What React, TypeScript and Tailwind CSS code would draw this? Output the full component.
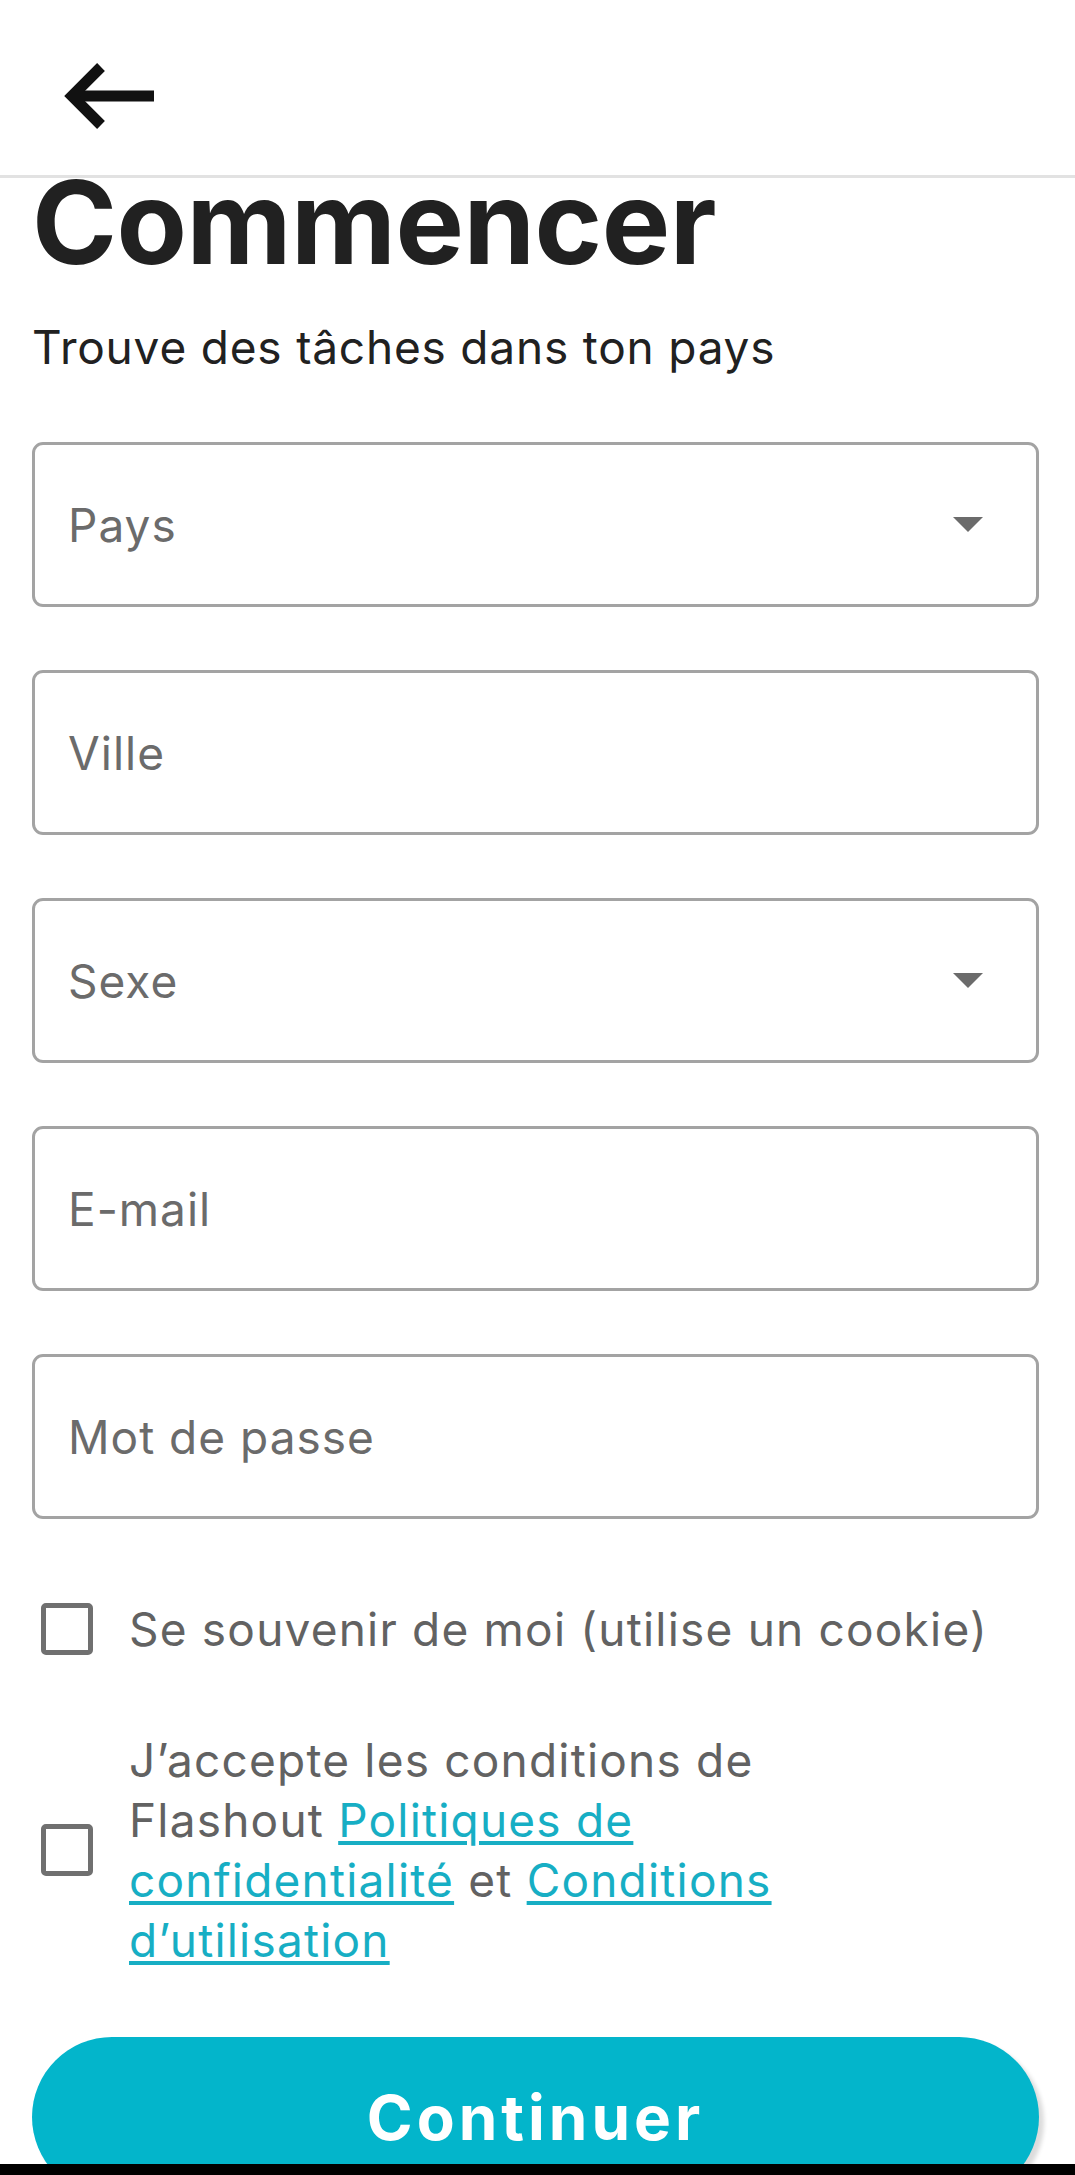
import { useState } from "react";

const font = { fontFamily: "Inter, 'Noto Sans', sans-serif" };

interface FieldProps {
  label: string;
  select?: boolean;
}

function Field({ label, select }: FieldProps) {
  return (
    <div className="flex items-center justify-between h-[165px] border-[3px] border-[#a3a3a3] rounded-[11px] pl-[33px] pr-[53px]">
      <span className="text-[46px] tracking-[1px] text-[#6b6b6b] leading-none">{label}</span>
      {select && (
        <svg width="30" height="15" viewBox="0 0 30 15">
          <path d="M0 0 L30 0 L15 15 Z" fill="#6b6b6b" />
        </svg>
      )}
    </div>
  );
}

function Checkbox({ checked, onClick }: { checked: boolean; onClick: () => void }) {
  return (
    <button
      onClick={onClick}
      className="w-[52px] h-[52px] shrink-0 rounded-[5px] border-[5px] border-[#707070] bg-white"
    >
      {checked && <span className="block w-full h-full bg-[#707070]" />}
    </button>
  );
}

export default function App() {
  const [remember, setRemember] = useState(false);
  const [accept, setAccept] = useState(false);

  return (
    <div className="relative h-[2175px] overflow-hidden bg-white" style={font}>
      {/* top bar */}
      <header className="h-[178px] border-b-[3px] border-[#e2e2e2] pl-[58px] pt-[60px]">
        <svg width="100" height="72" viewBox="0 0 100 72" fill="none">
          <path d="M13 36 H96" stroke="#111" strokeWidth="11" />
          <path d="M43 7 L14 36 L43 65" stroke="#111" strokeWidth="11" strokeLinejoin="miter" />
        </svg>
      </header>

      <main className="pl-[32px] pr-[36px]">
        <h1 className="h-[90px] text-[115px] leading-[90px] font-bold text-[#212121] tracking-[-0.5px]">
          Commencer
        </h1>
        <p className="mt-[52px] text-[46px] leading-[54px] tracking-[0.8px] text-[#212121]">
          Trouve des tâches dans ton pays
        </p>

        <div className="mt-[68px] flex flex-col gap-[63px]">
          <Field label="Pays" select />
          <Field label="Ville" />
          <Field label="Sexe" select />
          <Field label="E-mail" />
          <Field label="Mot de passe" />
        </div>

        <div className="mt-[80px] flex items-center pl-[9px] gap-[36px]">
          <Checkbox checked={remember} onClick={() => setRemember(!remember)} />
          <span className="text-[46px] leading-[60px] tracking-[1.2px] text-[#626262]">
            Se souvenir de moi (utilise un cookie)
          </span>
        </div>

        <div className="mt-[71px] flex items-center pl-[9px] gap-[36px]">
          <Checkbox checked={accept} onClick={() => setAccept(!accept)} />
          <p className="w-[700px] text-[46px] leading-[60px] tracking-[1.2px] text-[#626262]">
            J’accepte les conditions de Flashout{" "}
            <a href="#" className="text-[#17aec4] underline decoration-[4px] underline-offset-[4px]">
              Politiques de confidentialité
            </a>{" "}
            et{" "}
            <a href="#" className="text-[#17aec4] underline decoration-[4px] underline-offset-[4px]">
              Conditions d’utilisation
            </a>
          </p>
        </div>

        <button className="mt-[67px] w-full h-[160px] rounded-full bg-[#03b5cb] shadow-[5px_5px_4px_rgba(0,0,0,0.14)] text-white text-[62px] font-bold tracking-[4px]">
          Continuer
        </button>
      </main>

      <div className="absolute bottom-0 left-0 w-full h-[11px] bg-black" />
    </div>
  );
}
